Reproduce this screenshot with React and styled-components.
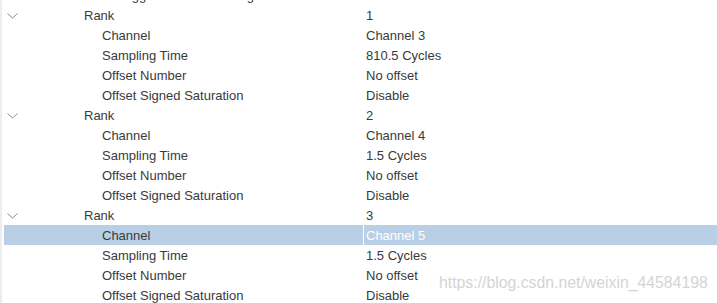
import React from "react";
import styled, { createGlobalStyle } from "styled-components";

const Global = createGlobalStyle`
  html, body { margin: 0; padding: 0; background: #fff; }
  body { font-family: "Liberation Sans", Arial, sans-serif; overflow: hidden; }
`;

const Frame = styled.div`
  position: relative;
  width: 717px;
  height: 303px;
  overflow: hidden;
  box-sizing: border-box;
  border-left: 2px solid #ededed;
  padding-left: 2px;
`;

const List = styled.div`
  display: flex;
  flex-direction: column;
  margin-top: -15px;
`;

const Row = styled.div`
  display: grid;
  grid-template-columns: 359px 1fr;
  column-gap: 1px;
  height: 20px;
  font-size: 13px;
  color: #3a3a3a;
`;

const NameCell = styled.div`
  position: relative;
  display: flex;
  align-items: center;
  padding-left: ${(p) => p.$indent}px;
  background: ${(p) => (p.$selected ? "#b9cfe6" : "transparent")};
  white-space: nowrap;
  overflow: hidden;
`;

const ValueCell = styled.div`
  display: flex;
  align-items: center;
  padding-left: 2px;
  background: ${(p) => (p.$selected ? "#b9cfe6" : "transparent")};
  color: ${(p) => (p.$selected ? "#fff" : "#3a3a3a")};
  white-space: nowrap;
`;

const Chevron = styled.svg`
  position: absolute;
  left: 3px;
  top: 8px;
  width: 11px;
  height: 6px;
`;

const Watermark = styled.div`
  position: absolute;
  left: 437px;
  top: 274px;
  font-size: 15.8px;
  color: #d4d4d4;
  font-family: "Liberation Sans", Arial, sans-serif;
  white-space: nowrap;
`;

const ChevronIcon = () => (
  <Chevron viewBox="0 0 11 6">
    <path d="M0.5 0.5 L5.5 5 L10.5 0.5" fill="none" stroke="#8a8a8a" strokeWidth="1" />
  </Chevron>
);

const rankBlock = (rank, channel, time, selectedChannel) => [
  { name: "Rank", value: String(rank), indent: 80, expander: true },
  { name: "Channel", value: channel, indent: 98, selected: selectedChannel },
  { name: "Sampling Time", value: time, indent: 98 },
  { name: "Offset Number", value: "No offset", indent: 98 },
  { name: "Offset Signed Saturation", value: "Disable", indent: 98 },
];

const rows = [
  { name: "External Trigger Conversion Edge", value: "None", indent: 62 },
  ...rankBlock(1, "Channel 3", "810.5 Cycles"),
  ...rankBlock(2, "Channel 4", "1.5 Cycles"),
  ...rankBlock(3, "Channel 5", "1.5 Cycles", true),
];

export default function App() {
  return (
    <>
      <Global />
      <Frame>
        <List>
          {rows.map((r, i) => (
            <Row key={i}>
              <NameCell $indent={r.indent} $selected={r.selected}>
                {r.expander && <ChevronIcon />}
                {r.name}
              </NameCell>
              <ValueCell $selected={r.selected}>{r.value}</ValueCell>
            </Row>
          ))}
        </List>
        <Watermark>https://blog.csdn.net/weixin_44584198</Watermark>
      </Frame>
    </>
  );
}
